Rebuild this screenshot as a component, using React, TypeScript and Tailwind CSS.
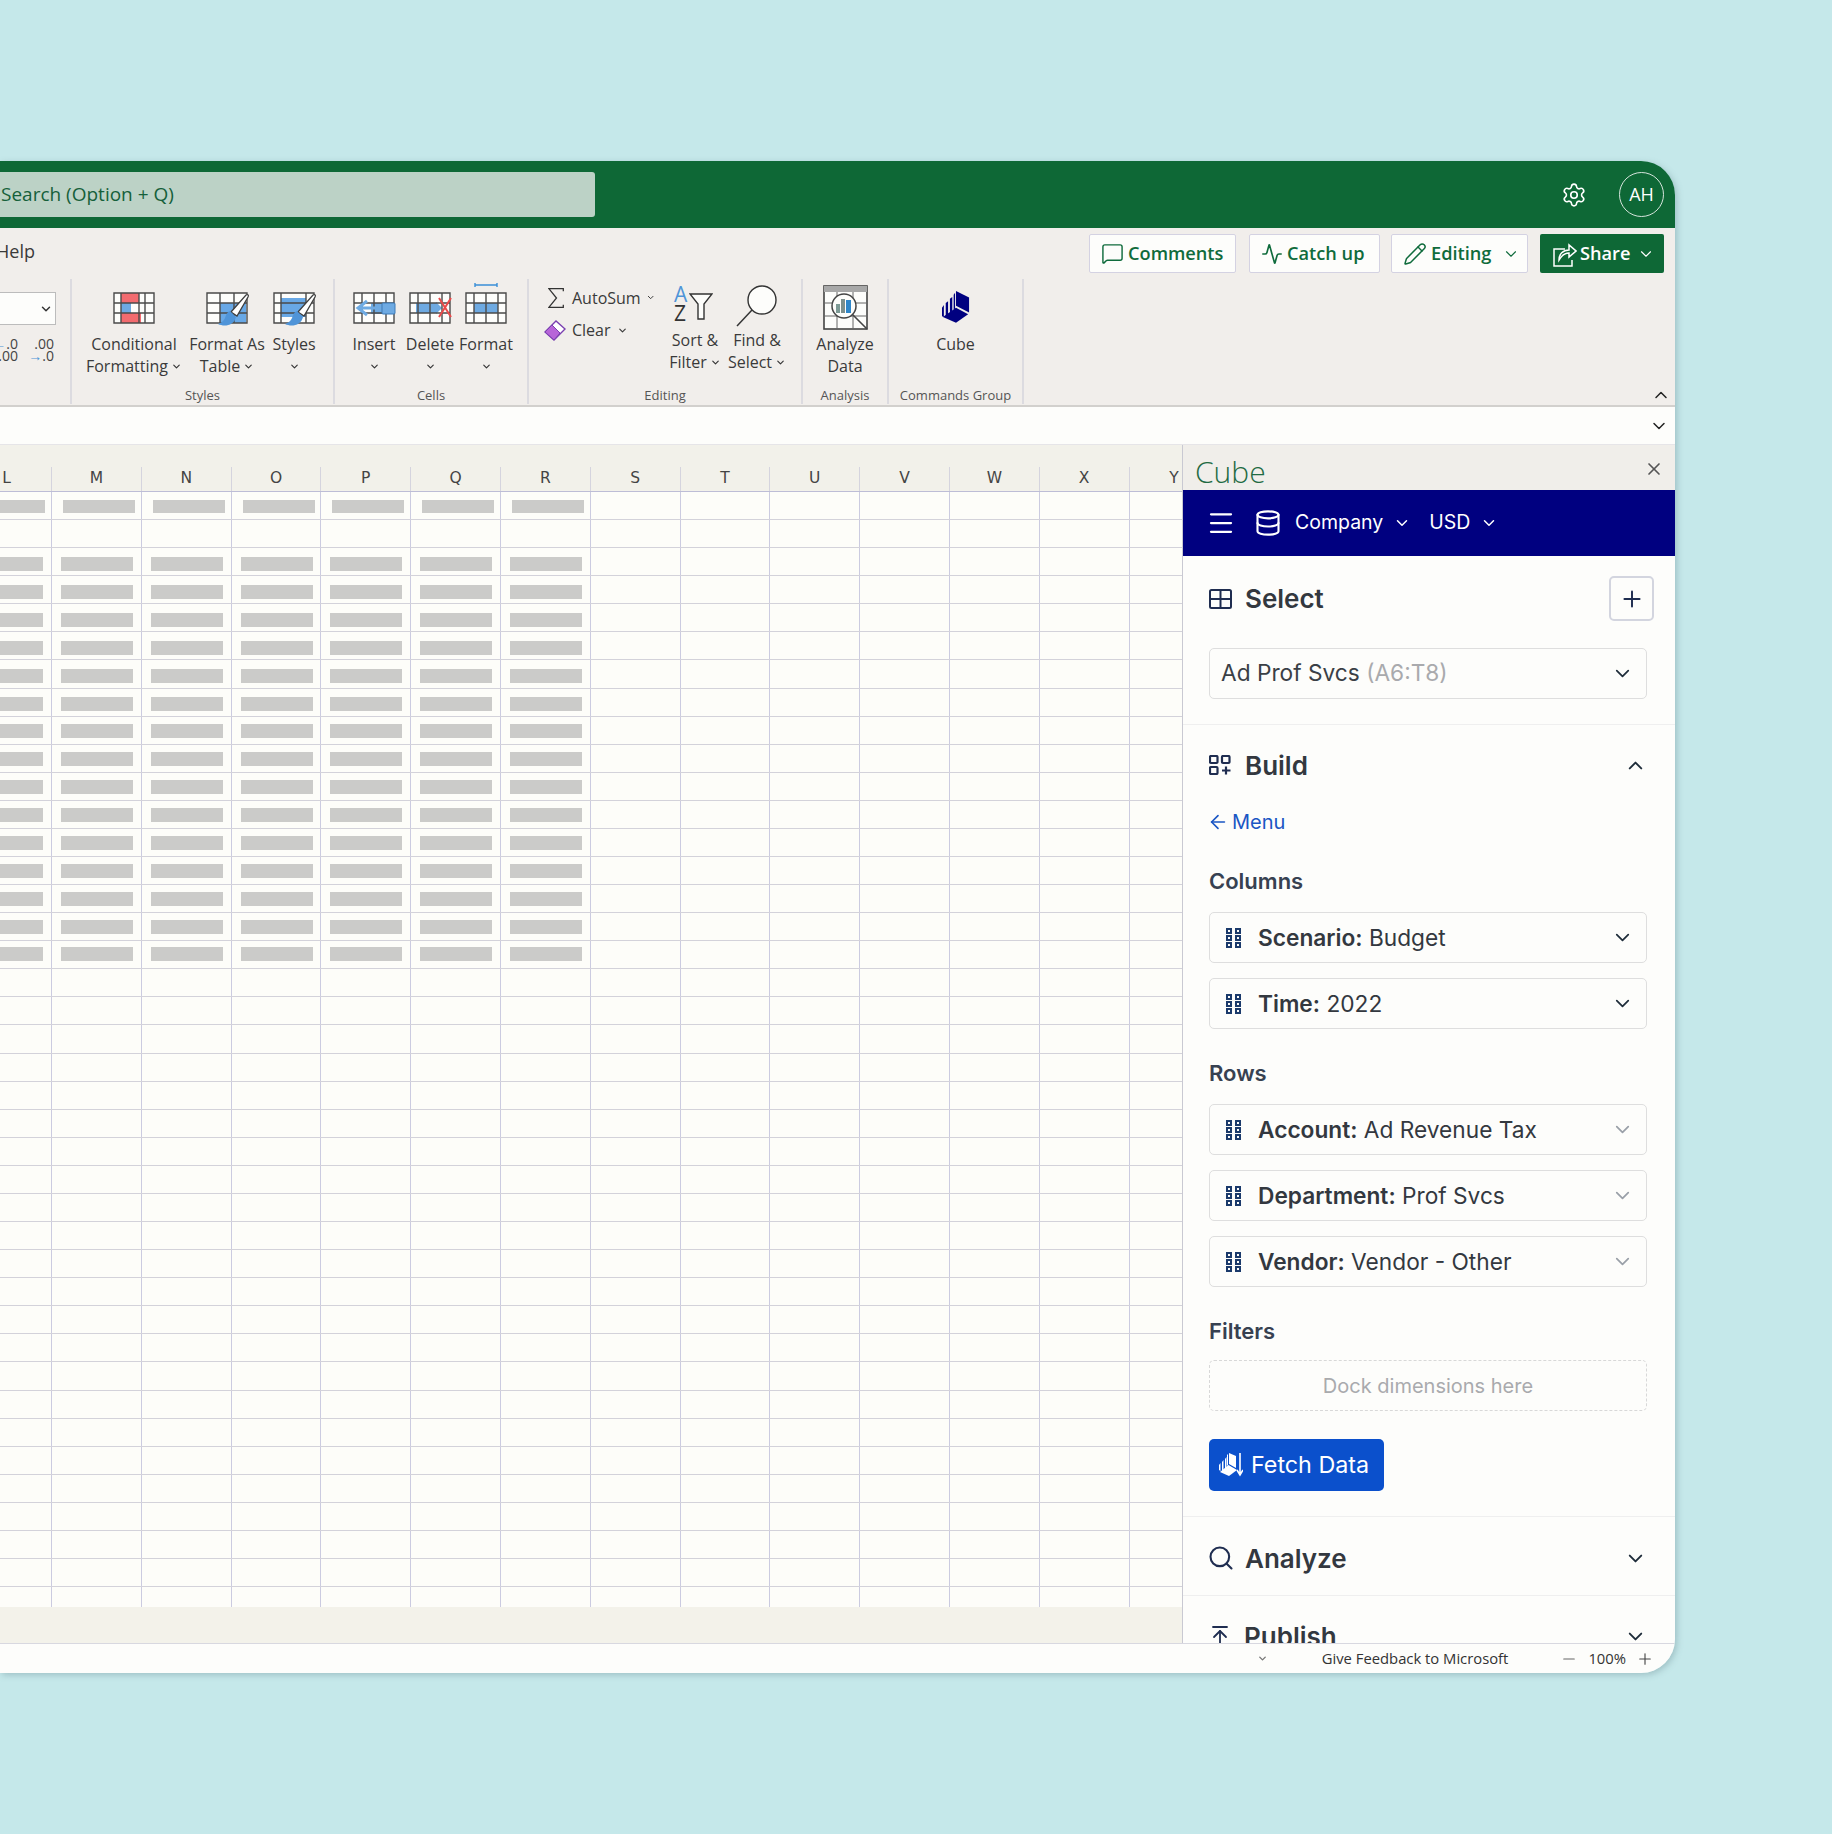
import {
  Activity,
  ArrowLeft,
  ArrowUpToLine,
  ChevronDown,
  ChevronUp,
  Database,
  Menu,
  MessageSquare,
  Minus,
  Pencil,
  Plus,
  Search,
  Settings,
  X,
} from "lucide-react";
import type { ReactNode } from "react";

const officeFont = "font-['Open_Sans',sans-serif]";

const columns = ["L", "M", "N", "O", "P", "Q", "R", "S", "T", "U", "V", "W", "X", "Y"];
const rowCount = 40;

// cells get a grey placeholder bar in row 0 and rows 2-16, columns L-R
function hasBar(row: number, col: number) {
  return col < 7 && (row === 0 || (row >= 2 && row <= 16));
}

function GridBase({
  under,
  over,
  cols = "M9 1v30M21 1v30M33 1v30",
}: {
  under?: ReactNode;
  over?: ReactNode;
  cols?: string;
}) {
  return (
    <svg width="42" height="32" viewBox="0 0 42 32" fill="none" className="overflow-visible">
      <rect x="1" y="1" width="40" height="30" fill="#fdfdfb" />
      {under}
      <path d={`M1 1h40v30H1zM1 11h40M1 21h40${cols}`} stroke="#4a4a4a" strokeWidth="1.4" />
      {over}
    </svg>
  );
}

function Brush() {
  return (
    <g>
      <path d="M25 20 40 3c2-1 3 0 2 2L31 24z" fill="#fff" stroke="#3f3f3f" strokeWidth="1.3" />
      <path d="M24 19c-3 1-4 4-5 7-1 3-4 5-7 6 6 3 16 2 18-7z" fill="#4f94d8" />
    </g>
  );
}

function ConditionalIcon() {
  return (
    <GridBase
      cols="M8 1v30M26 1v30M32 1v30"
      under={
        <>
          <rect x="8" y="1" width="18" height="10" fill="#f26b6f" />
          <rect x="8" y="11" width="10" height="10" fill="#6eaae2" />
          <rect x="8" y="21" width="20" height="10" fill="#f26b6f" />
        </>
      }
    />
  );
}

function FormatTableIcon() {
  return (
    <GridBase
      cols="M14 1v30M28 1v30"
      under={<rect x="14" y="11" width="26" height="20" fill="#68a8e6" />}
      over={<Brush />}
    />
  );
}

function StylesIcon() {
  return (
    <GridBase
      cols="M8 1v30M33 1v30"
      under={<rect x="8" y="6" width="25" height="19" fill="#68a8e6" />}
      over={<Brush />}
    />
  );
}

function InsertIcon() {
  return (
    <GridBase
      under={<rect x="18" y="11" width="24" height="11" rx="1" fill="#6eaae2" />}
      over={
        <>
          <path d="M14 9 5 16l9 7M6 16h17" stroke="#6eaae2" strokeWidth="3" />
          <rect x="29" y="11" width="13" height="11" rx="1" fill="#6eaae2" stroke="#3d7ab8" strokeWidth="1" />
        </>
      }
    />
  );
}

function DeleteIcon() {
  return (
    <GridBase
      under={
        <>
          <rect x="7" y="11" width="20" height="10" fill="#6eaae2" />
          <path d="M27 10v12l6-6z" fill="#6eaae2" />
        </>
      }
      over={<path d="m30 6 12 19M42 6 30 25" stroke="#ea4a4a" strokeWidth="2" />}
    />
  );
}

function FormatIcon() {
  return (
    <GridBase
      under={<rect x="9" y="11" width="24" height="10" fill="#6eaae2" />}
      over={<path d="M10-7h22M10-9v4M32-9v4" stroke="#3a8fd8" strokeWidth="1.4" />}
    />
  );
}

function EraserIcon() {
  return (
    <svg width="22" height="22" viewBox="0 0 22 22" fill="none">
      <path d="M1 13 12 2l9 8-7 7-4 4z" fill="#fff" stroke="#7a3fb0" strokeWidth="1.4" />
      <path d="M1 13 8 6l8 8-6 7z" fill="#b765d8" stroke="#7a3fb0" strokeWidth="1" />
    </svg>
  );
}

function SigmaIcon() {
  return (
    <svg width="20" height="24" viewBox="0 0 20 24" fill="none">
      <path d="M18 4V1H1l9 11L1 23h17v-3" stroke="#333" strokeWidth="1.500" />
    </svg>
  );
}

function SortIcon() {
  return (
    <div className={`flex h-[38px] w-[42px] items-end ${officeFont}`}>
      <div className="flex flex-col text-[21px] leading-[19px]">
        <span className="text-[#4f94d8]">A</span>
        <span className="text-[#333]">Z</span>
      </div>
      <svg width="24" height="27" viewBox="0 0 24 27" fill="none" className="mb-[3px] ml-[2px]">
        <path d="M1 1h22l-8 10v15H9V11z" fill="#fdfdfb" stroke="#333" strokeWidth="1.4" />
      </svg>
    </div>
  );
}

function FindIcon() {
  return (
    <svg width="42" height="42" viewBox="0 0 42 42" fill="none">
      <ellipse cx="26" cy="15" rx="14" ry="14" fill="#fdfdfb" stroke="#333" strokeWidth="1.4" />
      <path d="M16 25 1 41" stroke="#333" strokeWidth="1.5" />
    </svg>
  );
}

function AnalyzeIcon() {
  return (
    <svg width="45" height="45" viewBox="0 0 45 45" fill="none">
      <rect x="1" y="1" width="43" height="43" fill="#fdfdfb" stroke="#444" strokeWidth="1.6" />
      <rect x="1" y="1" width="43" height="6" fill="#a8a8a8" />
      <path d="M1 18h43M1 31h43M14 7v37M30 7v37" stroke="#666" strokeWidth="1" />
      <circle cx="21" cy="21" r="12" fill="#fdfdfb" stroke="#444" strokeWidth="1.5" />
      <path d="m30 30 14 14" stroke="#444" strokeWidth="1.6" />
      <rect x="13" y="19" width="4" height="9" fill="#7d9a95" />
      <rect x="18" y="14" width="4" height="14" fill="#7d8f8c" />
      <rect x="23" y="15" width="5" height="13" fill="#2f86c8" />
    </svg>
  );
}

function CubeLogo({ color, size }: { color: string; size: number }) {
  return (
    <svg width={size} height={(size * 36) / 30} viewBox="0 0 30 36" fill={color}>
      <path d="M15 1 29 8v16l-14-7z" />
      <path d="M0 19v9l2 1V16zM4 14v14l2.500-1.500V12zM8.500 9.500v15l2.500-1.500V7.500zM12.500 5v16l1.500-1V3z" />
      <path d="M15 19 28 26 15 35 1 29z" />
    </svg>
  );
}

function FetchIcon() {
  return (
    <svg width="24" height="26" viewBox="0 0 24 26" fill="#fff">
      <path d="M10 1 17 4v12L10 12z" />
      <path d="M0 13v5l1.500 1V11zM3 10v9l1.500-1V8zM6 7v10l1.500-1V5zM8 3v11l1-1V2z" />
      <path d="M9.500 13 18 18l-8 6-9-4z" />
      <path d="M21 1v20M18 18l3 5 3-5" stroke="#fff" strokeWidth="1.600" fill="none" />
    </svg>
  );
}

function ShareIcon() {
  return (
    <svg width="24" height="28" viewBox="0 0 24 28" fill="none" stroke="#fff" strokeWidth="1.5">
      <path d="M12 9H1v17h18v-6" />
      <path d="M6 20c0-6 4-10 10-10V5l7 6-7 6v-4c-4 0-7 2-10 7z" />
    </svg>
  );
}

function SelectIcon() {
  return (
    <svg width="23" height="20" viewBox="0 0 23 20" fill="none" stroke="#1f2d50" strokeWidth="2">
      <rect x="1" y="1" width="21" height="18" rx="1.500" />
      <path d="M1 10h21M11.500 1v18" />
    </svg>
  );
}

function BuildIcon() {
  return (
    <svg width="22" height="20" viewBox="0 0 22 20" fill="none" stroke="#1f2d50" strokeWidth="2.200">
      <rect x="1" y="1" width="7.500" height="7" rx="1" />
      <rect x="13" y="1" width="7.500" height="7" rx="1" />
      <rect x="1" y="12" width="7.500" height="7" rx="1" />
      <path d="M13 15.500h8.500M17 11.500v8" />
    </svg>
  );
}

function DragIcon() {
  return (
    <svg width="15" height="20" viewBox="0 0 15 20" fill="none" stroke="#1b3a6b" strokeWidth="2">
      <rect x="1" y="1" width="4" height="4" />
      <rect x="10" y="1" width="4" height="4" />
      <rect x="1" y="8" width="4" height="4" />
      <rect x="10" y="8" width="4" height="4" />
      <rect x="1" y="15" width="4" height="4" />
      <rect x="10" y="15" width="4" height="4" />
    </svg>
  );
}

function RibbonItem({
  icon,
  lines,
  menu = true,
  className = "",
  slot = "h-[41px]",
}: {
  icon: ReactNode;
  lines: string[];
  menu?: boolean;
  className?: string;
  slot?: string;
}) {
  return (
    <div className={`flex shrink-0 flex-col items-center text-[16px] leading-[22px] text-[#3a3a3a] ${className}`}>
      <div className={`flex items-start justify-center ${slot}`}>{icon}</div>
      {lines.map((line, i) => (
        <div key={line} className="flex items-center whitespace-nowrap">
          {line}
          {menu && i === lines.length - 1 && <ChevronDown size={11} strokeWidth={2.500} className="ml-[3px] text-[#333]" />}
        </div>
      ))}
    </div>
  );
}

function CellsItem({ icon, label, className = "" }: { icon: ReactNode; label: string; className?: string }) {
  return (
    <div className={`flex shrink-0 flex-col items-center text-[16px] leading-[22px] text-[#3a3a3a] ${className}`}>
      <div className="flex h-[41px] items-start justify-center">{icon}</div>
      <div>{label}</div>
      <ChevronDown size={11} strokeWidth={2.500} className="mt-[6px] text-[#333]" />
    </div>
  );
}

function RibbonGroup({ label, width, children }: { label: string; width: string; children: ReactNode }) {
  return (
    <div className={`flex h-[125px] shrink-0 flex-col border-r-2 border-[#dcdbe0] ${width}`}>
      <div className="flex flex-1 overflow-hidden pt-[13px]">{children}</div>
      <div className="text-center text-[13px] leading-[18px] text-[#555]">{label}</div>
    </div>
  );
}

function TopButton({
  icon,
  label,
  width,
  menu = false,
}: {
  icon: ReactNode;
  label: string;
  width: string;
  menu?: boolean;
}) {
  return (
    <div className={`flex h-[39px] items-center rounded-[2px] border border-[#d4d2e2] bg-[#fdfdfb] pl-[11px] text-[18.2px] font-semibold text-[#0f6b3c] ${width}`}>
      {icon}
      <span>{label}</span>
      {menu && <ChevronDown size={18} strokeWidth={1.500} className="ml-[11px]" />}
    </div>
  );
}

function Sheet() {
  return (
    <div className="flex min-w-0 flex-1 flex-col overflow-hidden">
      <div className="flex h-[47px] shrink-0 items-end border-b border-[#bdbdd6] bg-[#f2f1ea]">
        {columns.map((c, i) => (
          <div
            key={c}
            className={`flex h-[24px] shrink-0 items-center justify-center border-r border-[#d5d4de] font-['DejaVu_Sans',sans-serif] text-[15.5px] text-[#444] ${i === 0 ? "w-[52px] pr-[38px]" : "w-[89.8px]"}`}
          >
            {c}
          </div>
        ))}
      </div>
      <div className="flex-1 overflow-hidden bg-[#fdfdf9]">
        {Array.from({ length: rowCount }, (_, row) => (
          <div key={row} className="flex h-[28.08px] border-b border-[#d3d2da]">
            {columns.map((c, col) => (
              <div
                key={c}
                className={`h-full shrink-0 border-r border-[#cbcbe0] ${col === 0 ? "w-[52px]" : "w-[89.8px]"}`}
              >
                {hasBar(row, col) && (
                  <div
                    // the bars sit on a slightly tighter pitch than the grid rows
                    style={{ marginTop: row === 0 ? 8 : 9 - 0.2 * (row - 2) }}
                    className={`bg-[#cbcbc9] ${row === 0 ? "h-[13px]" : "h-[14px]"} ${
                      col === 0 ? (row === 0 ? "w-[45px]" : "w-[43px]") : row === 0 ? "ml-[11px] w-[72px]" : "ml-[9px] w-[72px]"
                    }`}
                  />
                )}
              </div>
            ))}
          </div>
        ))}
      </div>
      <div className="h-[36px] shrink-0 bg-[#f3f2ea]" />
    </div>
  );
}

function Field({ name, value, muted = false }: { name: string; value: string; muted?: boolean }) {
  return (
    <div className="flex h-[51px] items-center rounded-[5px] border border-[#dedede] pr-[12px] pl-[16px]">
      <DragIcon />
      <div className="ml-[17px] flex-1 pt-[1px] text-[22.7px] text-[#33383f]">
        <span className="font-semibold">{name}:</span> {value}
      </div>
      <ChevronDown size={23} strokeWidth={1.800} className={muted ? "text-[#9aa0a8]" : "text-[#1f2d3a]"} />
    </div>
  );
}

function SectionLabel({ children, className }: { children: ReactNode; className: string }) {
  return <div className={`h-[28px] text-[22px] leading-[28px] font-semibold text-[#374151] ${className}`}>{children}</div>;
}

function CubePanel() {
  return (
    <div className="flex w-[493px] shrink-0 flex-col border-l border-[#c9c9d2] bg-[#fdfdfb]">
      <div className={`flex h-[45px] shrink-0 items-center justify-between bg-[#f0eeea] pt-[7px] pr-[11px] pl-[12px] ${officeFont}`}>
        <span className="text-[30px] font-light text-[#1f6b43]">Cube</span>
        <X size={20} strokeWidth={2} className="-mt-[4px] text-[#555]" />
      </div>
      <div className="flex h-[66px] shrink-0 items-center bg-[#000080] pl-[23px] font-['Inter',sans-serif] text-[19.5px] text-white">
        <Menu size={30} strokeWidth={1.800} />
        <Database size={28} strokeWidth={1.800} className="ml-[18px]" />
        <span className="ml-[13px]">Company</span>
        <ChevronDown size={18} strokeWidth={2} className="ml-[10px]" />
        <span className="ml-[18px]">USD</span>
        <ChevronDown size={18} strokeWidth={2} className="ml-[10px]" />
      </div>

      <div className="min-h-0 flex-1 overflow-hidden font-['Inter',sans-serif]">
        {/* Select */}
        <div className="border-b border-[#efefef] pt-[20px] pr-[28px] pb-[25px] pl-[26px]">
          <div className="flex h-[45px] items-center">
            <SelectIcon />
            <span className="ml-[13px] flex-1 text-[26px] font-semibold text-[#33383f]">Select</span>
            <div className="-mr-[7px] flex h-[45px] w-[45px] items-center justify-center rounded-[5px] border-2 border-[#d3d5df]">
              <Plus size={26} strokeWidth={1.800} className="text-[#1f2d50]" />
            </div>
          </div>
          <div className="mt-[27px] flex h-[51px] items-center justify-between rounded-[5px] border border-[#dedede] pr-[12px] pl-[11px] text-[22.7px] text-[#3a3f46]">
            <div>
              Ad Prof Svcs <span className="text-[#a9aaad]">(A6:T8)</span>
            </div>
            <ChevronDown size={23} strokeWidth={1.800} className="text-[#1f2d3a]" />
          </div>
        </div>

        {/* Build */}
        <div className="border-b border-[#efefef] pt-[23px] pr-[28px] pb-[25px] pl-[26px]">
          <div className="flex h-[34px] items-center">
            <BuildIcon />
            <span className="ml-[14px] flex-1 text-[26px] font-semibold text-[#33383f]">Build</span>
            <ChevronUp size={23} strokeWidth={2} className="text-[#1f2d3a]" />
          </div>
          <div className="mt-[28px] flex h-[24px] items-center text-[20px] text-[#1a56c4]">
            <ArrowLeft size={22} strokeWidth={1.800} className="-ml-[2px]" />
            <span className="ml-[3px]">Menu</span>
          </div>
          <SectionLabel className="mt-[33px]">Columns</SectionLabel>
          <div className="mt-[17px] flex flex-col gap-[15px]">
            <Field name="Scenario" value="Budget" />
            <Field name="Time" value="2022" />
          </div>
          <SectionLabel className="mt-[30px]">Rows</SectionLabel>
          <div className="mt-[17px] flex flex-col gap-[15px]">
            <Field name="Account" value="Ad Revenue Tax" muted />
            <Field name="Department" value="Prof Svcs" muted />
            <Field name="Vendor" value="Vendor - Other" muted />
          </div>
          <SectionLabel className="mt-[30px]">Filters</SectionLabel>
          <div className="mt-[15px] flex h-[51px] items-center justify-center rounded-[5px] border border-dashed border-[#d8d8d8] text-[20px] text-[#a9aaad]">
            Dock dimensions here
          </div>
          <div className="mt-[28px] flex h-[52px] w-[175px] items-center rounded-[5px] bg-[#0b50cc] pl-[10px] text-[23.3px] text-white">
            <FetchIcon />
            <span className="ml-[8px]">Fetch Data</span>
          </div>
        </div>

        {/* Analyze */}
        <div className="border-b border-[#efefef] pt-[24px] pr-[28px] pb-[20px] pl-[26px]">
          <div className="flex h-[34px] items-center">
            <Search size={28} strokeWidth={1.800} className="-ml-[2px] text-[#1f2d50]" />
            <span className="ml-[10px] flex-1 text-[26px] font-semibold text-[#33383f]">Analyze</span>
            <ChevronDown size={23} strokeWidth={2} className="text-[#1f2d3a]" />
          </div>
        </div>

        {/* Publish */}
        <div className="pt-[23px] pr-[28px] pl-[26px]">
          <div className="flex h-[34px] items-center">
            <ArrowUpToLine size={24} strokeWidth={1.800} className="-ml-[1px] text-[#1f2d50]" />
            <span className="ml-[12px] flex-1 text-[26px] font-semibold text-[#33383f]">Publish</span>
            <ChevronDown size={23} strokeWidth={2} className="text-[#1f2d3a]" />
          </div>
        </div>
      </div>
    </div>
  );
}

export default function App() {
  return (
    <div className="h-[1834px] w-full overflow-hidden bg-[#c5e8ea] pt-[161px] pr-[157px]">
      <div className={`flex h-[1512px] flex-col overflow-hidden rounded-r-[34px] shadow-[2px_2px_6px_rgba(90,120,130,0.35)] ${officeFont}`}>
        {/* Title bar */}
        <div className="flex h-[67px] shrink-0 items-center bg-[#0e6836] pr-[11px]">
          <div className="flex h-[45px] w-[595px] items-center rounded-r-[3px] bg-[#bcd2c6] pl-[1px] text-[19px] text-[#15603a]">
            <span>Search (Option + Q)</span>
          </div>
          <Settings size={26} strokeWidth={1.500} className="ml-auto text-white" />
          <div className="ml-[32px] flex h-[45px] w-[45px] items-center justify-center rounded-full border border-[#d6e4dc] text-[18px] text-white">
            AH
          </div>
        </div>

        {/* Ribbon */}
        <div className="shrink-0 border-b-2 border-[#d2d0cd] bg-[#f1eeeb]">
          <div className="flex h-[51px] items-start justify-between pt-[6px] pr-[11px]">
            <span className="-ml-[4px] text-[18px] leading-[34px] text-[#3a3a3a]">Help</span>
            <div className="flex">
              <TopButton icon={<MessageSquare size={23} strokeWidth={1.500} className="mr-[4px]" />} label="Comments" width="w-[147px]" />
              <div className="ml-[13px]">
                <TopButton icon={<Activity size={22} strokeWidth={1.800} className="mr-[4px]" />} label="Catch up" width="w-[131px]" />
              </div>
              <div className="ml-[11px]">
                <TopButton icon={<Pencil size={24} strokeWidth={1.500} className="mr-[4px]" />} label="Editing" width="w-[137px]" menu />
              </div>
              <div className="ml-[12px] flex h-[39px] w-[124px] items-center rounded-[2px] bg-[#0e6836] pl-[13px] text-[18.2px] font-semibold text-white">
                <ShareIcon />
                <span className="ml-[3px]">Share</span>
                <ChevronDown size={18} strokeWidth={1.500} className="ml-[7px]" />
              </div>
            </div>
          </div>
          <div className="flex h-[126px] items-start">
            <RibbonGroup label="" width="w-[72px]">
              <div className="flex w-full flex-col">
                <div className="flex h-[33px] w-[56px] items-center justify-end border border-l-0 border-[#bcbcbc] bg-[#fdfdfb] pr-[2px]">
                  <ChevronDown size={14} strokeWidth={2.500} className="text-[#333]" />
                </div>
                <div className="mt-[13px] flex gap-[12px] text-[14px] leading-[12px] text-[#444]">
                  <div className="flex w-[18px] flex-col items-end">
                    <span>
                      <span className="text-[#4f94d8]">←</span>.0
                    </span>
                    <span>.00</span>
                  </div>
                  <div className="flex w-[24px] flex-col items-end">
                    <span>.00</span>
                    <span>
                      <span className="text-[#4f94d8]">→</span>.0
                    </span>
                  </div>
                </div>
              </div>
            </RibbonGroup>
            <RibbonGroup label="Styles" width="w-[263px]">
              <RibbonItem icon={<ConditionalIcon />} lines={["Conditional", "Formatting"]} className="ml-[13px] w-[98px]" />
              <RibbonItem icon={<FormatTableIcon />} lines={["Format As", "Table"]} className="ml-[5px] w-[78px]" />
              <CellsItem icon={<StylesIcon />} label="Styles" className="ml-[4px] w-[48px]" />
            </RibbonGroup>
            <RibbonGroup label="Cells" width="w-[194px]">
              <CellsItem icon={<InsertIcon />} label="Insert" className="ml-[14px] w-[50px]" />
              <CellsItem icon={<DeleteIcon />} label="Delete" className="ml-[6px] w-[50px]" />
              <CellsItem icon={<FormatIcon />} label="Format" className="ml-[6px] w-[50px]" />
            </RibbonGroup>
            <RibbonGroup label="Editing" width="w-[274px]">
              <div className="ml-[19px] -mt-[11px] flex w-[107px] shrink-0 flex-col text-[16px] text-[#3a3a3a]">
                <div className="flex h-[33px] items-center">
                  <SigmaIcon />
                  <span className="ml-[7px]">AutoSum</span>
                  <ChevronDown size={11} strokeWidth={2.500} className="ml-[5px]" />
                </div>
                <div className="-ml-[4px] flex h-[32px] items-center">
                  <EraserIcon />
                  <span className="ml-[6px]">Clear</span>
                  <ChevronDown size={11} strokeWidth={2.500} className="ml-[6px]" />
                </div>
              </div>
              <RibbonItem icon={<SortIcon />} lines={["Sort &", "Filter"]} slot="h-[44px] -mt-[7px]" className="ml-[14px] w-[52px]" />
              <RibbonItem icon={<FindIcon />} lines={["Find &", "Select"]} slot="h-[44px] -mt-[7px]" className="ml-[8px] w-[56px]" />
            </RibbonGroup>
            <RibbonGroup label="Analysis" width="w-[86px]">
              <RibbonItem icon={<AnalyzeIcon />} lines={["Analyze", "Data"]} menu={false} slot="h-[48px] -mt-[7px]" className="w-full" />
            </RibbonGroup>
            <RibbonGroup label="Commands Group" width="w-[135px]">
              <RibbonItem icon={<CubeLogo color="#000080" size={28} />} lines={["Cube"]} menu={false} slot="h-[41px] -mt-[2px] mb-[2px]" className="w-full" />
            </RibbonGroup>
            <ChevronUp size={20} strokeWidth={1.800} className="mt-[106px] mr-[4px] ml-auto text-[#222]" />
          </div>
        </div>

        {/* Formula bar */}
        <div className="flex h-[38px] shrink-0 items-center justify-end border-b border-[#e6e5e8] bg-[#fdfdfb] pr-[6px]">
          <ChevronDown size={20} strokeWidth={1.800} className="text-[#222]" />
        </div>

        {/* Sheet and add-in pane */}
        <div className="flex min-h-0 flex-1">
          <Sheet />
          <CubePanel />
        </div>

        {/* Status bar */}
        <div className="flex h-[30px] shrink-0 items-center justify-end border-t border-[#d8d8e0] bg-[#fdfdfb] pr-[21px] text-[14.8px] text-[#333]">
          <ChevronDown size={11} strokeWidth={3} className="mr-[54px] text-[#777]" />
          <span className="mr-[52px]">Give Feedback to Microsoft</span>
          <Minus size={18} strokeWidth={1.500} className="text-[#666]" />
          <span className="mr-[10px] ml-[10px]">100%</span>
          <Plus size={18} strokeWidth={1.500} className="text-[#444]" />
        </div>
      </div>
    </div>
  );
}
